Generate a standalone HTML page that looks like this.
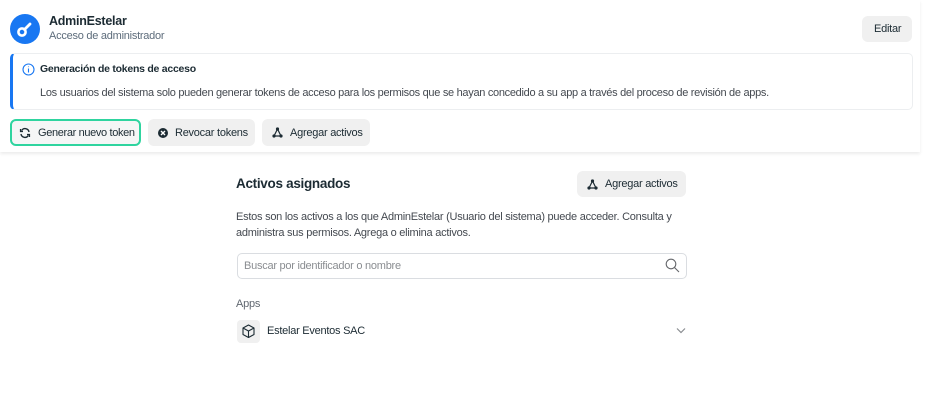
<!DOCTYPE html>
<html><head><meta charset="utf-8"><style>
*{margin:0;padding:0;box-sizing:border-box}
body{width:925px;height:411px;background:#fff;font-family:"Liberation Sans",sans-serif;color:#1c2b33;position:relative;overflow:hidden;letter-spacing:-0.25px}
.a{position:absolute;white-space:nowrap}
.btn{position:absolute;background:#f0f0f0;border-radius:6px;font-size:11px;color:#1c2b33;display:flex;align-items:center;padding-left:10px;white-space:nowrap}
.btn svg{margin-right:7px;flex:none}
</style></head><body>
<div class="a" style="left:0;top:0;width:920px;height:152px;box-shadow:0 2px 3px rgba(0,0,0,.08)"></div>
<div class="a" style="left:10px;top:14px;width:30px;height:30px;border-radius:50%;background:#1877f2">
<svg width="30" height="30" viewBox="0 0 30 30"><circle cx="12" cy="18" r="3.6" fill="none" stroke="#fff" stroke-width="2.6"/><path d="M14.5 15.5L20 10" stroke="#fff" stroke-width="2.8" stroke-linecap="round"/></svg></div>
<div class="a" style="left:49px;top:14px;font-size:12.5px;font-weight:bold">AdminEstelar</div>
<div class="a" style="left:49px;top:30px;font-size:11px;color:#5d6c7b">Acceso de administrador</div>
<div class="btn" style="left:862px;top:16px;width:50px;height:26px;padding-left:12px">Editar</div>
<div class="a" style="left:10px;top:53px;width:903px;height:57px;border:1px solid #eceef0;border-left:3px solid #1877f2;border-radius:5px"></div>
<svg class="a" style="left:22px;top:63px" width="13" height="13" viewBox="0 0 13 13"><circle cx="6.5" cy="6.5" r="5.5" fill="none" stroke="#1877f2" stroke-width="1.1"/><path d="M6.5 5.5v4M6.5 3.5v.6" stroke="#1877f2" stroke-width="1.1"/></svg>
<div class="a" style="left:40px;top:63px;font-size:10.5px;font-weight:bold">Generación de tokens de acceso</div>
<div class="a" style="left:40px;top:87px;font-size:11px;letter-spacing:-0.3px;color:#444950">Los usuarios del sistema solo pueden generar tokens de acceso para los permisos que se hayan concedido a su app a través del proceso de revisión de apps.</div>
<div class="btn" style="left:10px;top:119px;width:131px;height:27px;background:#f5f6f6;border:2px solid #2fd49f;padding-left:7px;letter-spacing:-0.35px"><svg width="12" height="12" viewBox="0 0 12 12"><path d="M10 5A4 4 0 0 0 2.6 3.6M2 7a4 4 0 0 0 7.4 1.4" fill="none" stroke="#1c2b33" stroke-width="1.4"/><path d="M1.5 2v2.5H4M10.5 10V7.5H8" fill="none" stroke="#1c2b33" stroke-width="1.2"/></svg>Generar nuevo token</div>
<div class="btn" style="left:148px;top:119px;width:107px;height:27px"><svg width="10" height="10" viewBox="0 0 10 10"><circle cx="5" cy="5" r="5" fill="#1c2b33"/><path d="M3 3l4 4M7 3L3 7" stroke="#fff" stroke-width="1.4"/></svg>Revocar tokens</div>
<div class="btn" style="left:262px;top:119px;width:108px;height:27px"><svg width="11" height="11" viewBox="0 0 11 11"><path d="M5.5 2L2 9h7z" fill="none" stroke="#1c2b33" stroke-width="1.2"/><circle cx="5.5" cy="2" r="1.6" fill="#1c2b33"/><circle cx="2" cy="9" r="1.6" fill="#1c2b33"/><circle cx="9" cy="9" r="1.6" fill="#1c2b33"/></svg>Agregar activos</div>
<div class="a" style="left:236px;top:176px;font-size:13.5px;font-weight:bold;letter-spacing:-0.3px">Activos asignados</div>
<div class="btn" style="left:577px;top:171px;width:109px;height:26px"><svg width="11" height="11" viewBox="0 0 11 11"><path d="M5.5 2L2 9h7z" fill="none" stroke="#1c2b33" stroke-width="1.2"/><circle cx="5.5" cy="2" r="1.6" fill="#1c2b33"/><circle cx="2" cy="9" r="1.6" fill="#1c2b33"/><circle cx="9" cy="9" r="1.6" fill="#1c2b33"/></svg>Agregar activos</div>
<div class="a" style="left:236px;top:209px;font-size:11px;line-height:16px;color:#444950">Estos son los activos a los que AdminEstelar (Usuario del sistema) puede acceder. Consulta y<br>administra sus permisos. Agrega o elimina activos.</div>
<div class="a" style="left:237px;top:253px;width:450px;height:26px;border:1px solid #dadde1;border-radius:5px"></div>
<div class="a" style="left:244px;top:260px;font-size:11px;color:#8a8d91">Buscar por identificador o nombre</div>
<svg class="a" style="left:665px;top:258px" width="15" height="15" viewBox="0 0 15 15"><circle cx="6" cy="6" r="4.8" fill="none" stroke="#65676b" stroke-width="1.1"/><path d="M9.5 9.5L14 14" stroke="#65676b" stroke-width="1.1"/></svg>
<div class="a" style="left:236px;top:298px;font-size:11px;color:#606770">Apps</div>
<div class="a" style="left:237px;top:320px;width:23px;height:23px;background:#f0f0f0;border-radius:4px"><svg width="23" height="23" viewBox="0 0 23 23"><path d="M11.5 5L17 8v6.5L11.5 17.5 6 14.5V8zM6 8l5.5 3 5.5-3M11.5 11v6.5" fill="none" stroke="#1c2b33" stroke-width="1.1" stroke-linejoin="round"/></svg></div>
<div class="a" style="left:267px;top:325px;font-size:11px">Estelar Eventos SAC</div>
<svg class="a" style="left:676px;top:327px" width="10" height="7" viewBox="0 0 10 7"><path d="M1 1.5l4 4 4-4" fill="none" stroke="#8a8d91" stroke-width="1.2"/></svg>
</body></html>
